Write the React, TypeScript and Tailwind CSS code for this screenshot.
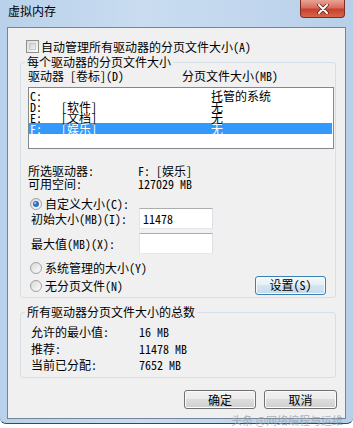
import React from 'react';

const drives = [
    { letter: 'C:', label: '', size: '托管的系统', selected: false },
    { letter: 'D:', label: '[软件]', size: '无', selected: false },
    { letter: 'E:', label: '[文档]', size: '无', selected: false },
    { letter: 'F:', label: '[娱乐]', size: '无', selected: true },
];

function Radio({ checked, id }: { checked: boolean; id: string }) {
    return (
        <svg width="12" height="12" viewBox="0 0 12 12" className="shrink-0">
            <defs>
                <linearGradient id={id} x1="0" y1="0" x2="1" y2="1">
                    <stop offset="0" stopColor="#d6d6d6" />
                    <stop offset="1" stopColor="#ffffff" />
                </linearGradient>
            </defs>
            <circle cx="6" cy="6" r="5.5" fill={`url(#${id})`} stroke="#a0a0a0" />
            {checked && <circle cx="6" cy="6" r="3" fill="#2f6fbf" />}
            {checked && <circle cx="5.2" cy="5.2" r="1.1" fill="#9cc8f0" />}
        </svg>
    );
}

function TextBox({ value }: { value?: string }) {
    return (
        <div className="w-[74px] h-[21px] bg-white border border-[#abadb3] border-r-[#dbdfe6] border-b-[#e3e9ef] border-l-[#e2e3ea] px-[3px] flex items-center">
            {value}
        </div>
    );
}

function Button({ children, width, focused }: { children: React.ReactNode; width: string; focused?: boolean }) {
    return (
        <div
            className={
                focused
                    ? `${width} h-[19px] rounded-[3px] border border-[#3c7fb1] bg-[linear-gradient(#f3f8fb_0%,#e5eff6_50%,#d3e5f1_50%,#c4dbeb_100%)] shadow-[inset_0_0_0_1px_#f8fbfd] flex items-center justify-center`
                    : `${width} h-[19px] rounded-[3px] border border-[#707070] bg-[linear-gradient(#f2f2f2_0%,#ebebeb_50%,#dddddd_50%,#cfcfcf_100%)] shadow-[inset_0_0_0_1px_#fbfbfb] flex items-center justify-center`
            }
        >
            {children}
        </div>
    );
}

export default function App() {
    return (
        <div className="w-[353px] h-[428px] overflow-hidden bg-white relative text-[12px] leading-[12px] text-black font-['Noto_Sans_Mono_CJK_SC','Noto_Sans_CJK_SC',monospace]">
            <div className="h-[424px] bg-[linear-gradient(90deg,#b9d1ea,#c9dcf0_40%,#c2d7ee_70%,#b7cfe9)] border-b border-[#3b4a5a] rounded-b-[6px] flex flex-col px-[7px]">
                {/* title bar */}
                <div className="h-[27px] relative shrink-0">
                    <div className="pt-[5px] pl-[1px]">虚拟内存</div>
                    <div className="absolute top-0 right-[1px] w-[45px] h-[18px] rounded-b-[4px] border border-t-0 border-[#7b2e25] bg-[linear-gradient(#e9a493_0%,#d86d5c_45%,#c8402e_55%,#d7654d_100%)] flex items-center justify-center">
                        <svg width="12" height="10" viewBox="0 0 12 10">
                            <path d="M2 1 L10 9 M10 1 L2 9" stroke="#5a1c14" strokeWidth="3.4" strokeLinecap="round" />
                            <path d="M2 1 L10 9 M10 1 L2 9" stroke="#ffffff" strokeWidth="2" strokeLinecap="round" />
                        </svg>
                    </div>
                </div>

                {/* client area */}
                <div className="h-[392px] border border-[#738597] bg-[#f0f0f0] flex flex-col relative">
                    <div className="mt-[12px] ml-[18px] h-[13px] flex items-center gap-[2px]">
                        <div className="w-[13px] h-[13px] border border-[#8e8f8f] bg-[linear-gradient(135deg,#dcdcdc,#fbfbfb)] p-[2px]">
                            <div className="w-full h-full border border-[#c9c9c9] bg-[linear-gradient(135deg,#cfcfcf,#f4f4f4)]" />
                        </div>
                        <span>自动管理所有驱动器的分页文件大小(A)</span>
                    </div>

                    <fieldset className="mt-[3px] ml-[12px] w-[316px] border border-[#d5dfe5] rounded-[3px] p-0 m-0">
                        <legend className="ml-[4px] px-[2px] leading-[12px]">每个驱动器的分页文件大小</legend>
                        <div className="mt-[2px] ml-[7px] flex">
                            <span className="w-[154px]">驱动器 [卷标](D)</span>
                            <span>分页文件大小(MB)</span>
                        </div>

                        <div className="mt-[5px] ml-[7px] w-[306px] h-[62px] border border-[#828790] bg-white pt-[2px] leading-[11px]">
                            {drives.map(d => (
                                <div
                                    key={d.letter}
                                    className={d.selected ? 'h-[11px] mr-[1px] flex bg-[#3399ff] text-white' : 'h-[11px] mr-[1px] flex'}
                                >
                                    <span className="w-[32px] pl-[1px]">{d.letter}</span>
                                    <span className="w-[150px]">{d.label}</span>
                                    <span>{d.size}</span>
                                </div>
                            ))}
                        </div>

                        <div className="mt-[16px] ml-[7px] flex">
                            <span className="w-[110px]">所选驱动器:</span>
                            <span>F:  [娱乐]</span>
                        </div>
                        <div className="mt-[1px] ml-[7px] flex">
                            <span className="w-[110px]">可用空间:</span>
                            <span>127029 MB</span>
                        </div>

                        <div className="mt-[8px] ml-[9px] h-[12px] flex items-center gap-[3px]">
                            <Radio checked id="r1" />
                            <span>自定义大小(C):</span>
                        </div>
                        <div className="-mt-[2px] ml-[10px] flex items-center">
                            <span className="w-[108px]">初始大小(MB)(I):</span>
                            <TextBox value="11478" />
                        </div>
                        <div className="mt-[4px] ml-[10px] flex items-center">
                            <span className="w-[108px]">最大值(MB)(X):</span>
                            <TextBox />
                        </div>

                        <div className="mt-[8px] ml-[9px] h-[12px] flex items-center gap-[3px]">
                            <Radio checked={false} id="r2" />
                            <span>系统管理的大小(Y)</span>
                        </div>
                        <div className="mt-[2px] mb-[3px] ml-[9px] mr-[9px] flex items-center justify-between">
                            <div className="flex items-center gap-[3px] mt-[2px]">
                                <Radio checked={false} id="r3" />
                                <span>无分页文件(N)</span>
                            </div>
                            <div className="h-[18px] flex items-center">
                                <Button width="w-[71px]" focused>设置(S)</Button>
                            </div>
                        </div>
                    </fieldset>

                    <fieldset className="mt-[8px] ml-[12px] w-[316px] border border-[#d5dfe5] rounded-[3px] p-0 m-0 pb-[6px]">
                        <legend className="ml-[4px] px-[2px] leading-[12px]">所有驱动器分页文件大小的总数</legend>
                        <div className="mt-[8px] ml-[10px] flex">
                            <span className="w-[108px]">允许的最小值:</span>
                            <span>16 MB</span>
                        </div>
                        <div className="mt-[5px] ml-[10px] flex">
                            <span className="w-[108px]">推荐:</span>
                            <span>11478 MB</span>
                        </div>
                        <div className="mt-[4px] ml-[10px] flex">
                            <span className="w-[108px]">当前已分配:</span>
                            <span>7652 MB</span>
                        </div>
                    </fieldset>

                    <div className="mt-[12px] mr-[8px] flex justify-end gap-[8px]">
                        <Button width="w-[72px]">确定</Button>
                        <Button width="w-[73px]">取消</Button>
                    </div>

                    <div className="absolute right-[2px] bottom-[-8px] text-[11px] leading-[12px] text-[#9aa3ad] opacity-80 font-['Noto_Sans_CJK_SC',sans-serif]">
                        头条 @网络编程与运维
                    </div>
                </div>
            </div>
        </div>
    );
}
